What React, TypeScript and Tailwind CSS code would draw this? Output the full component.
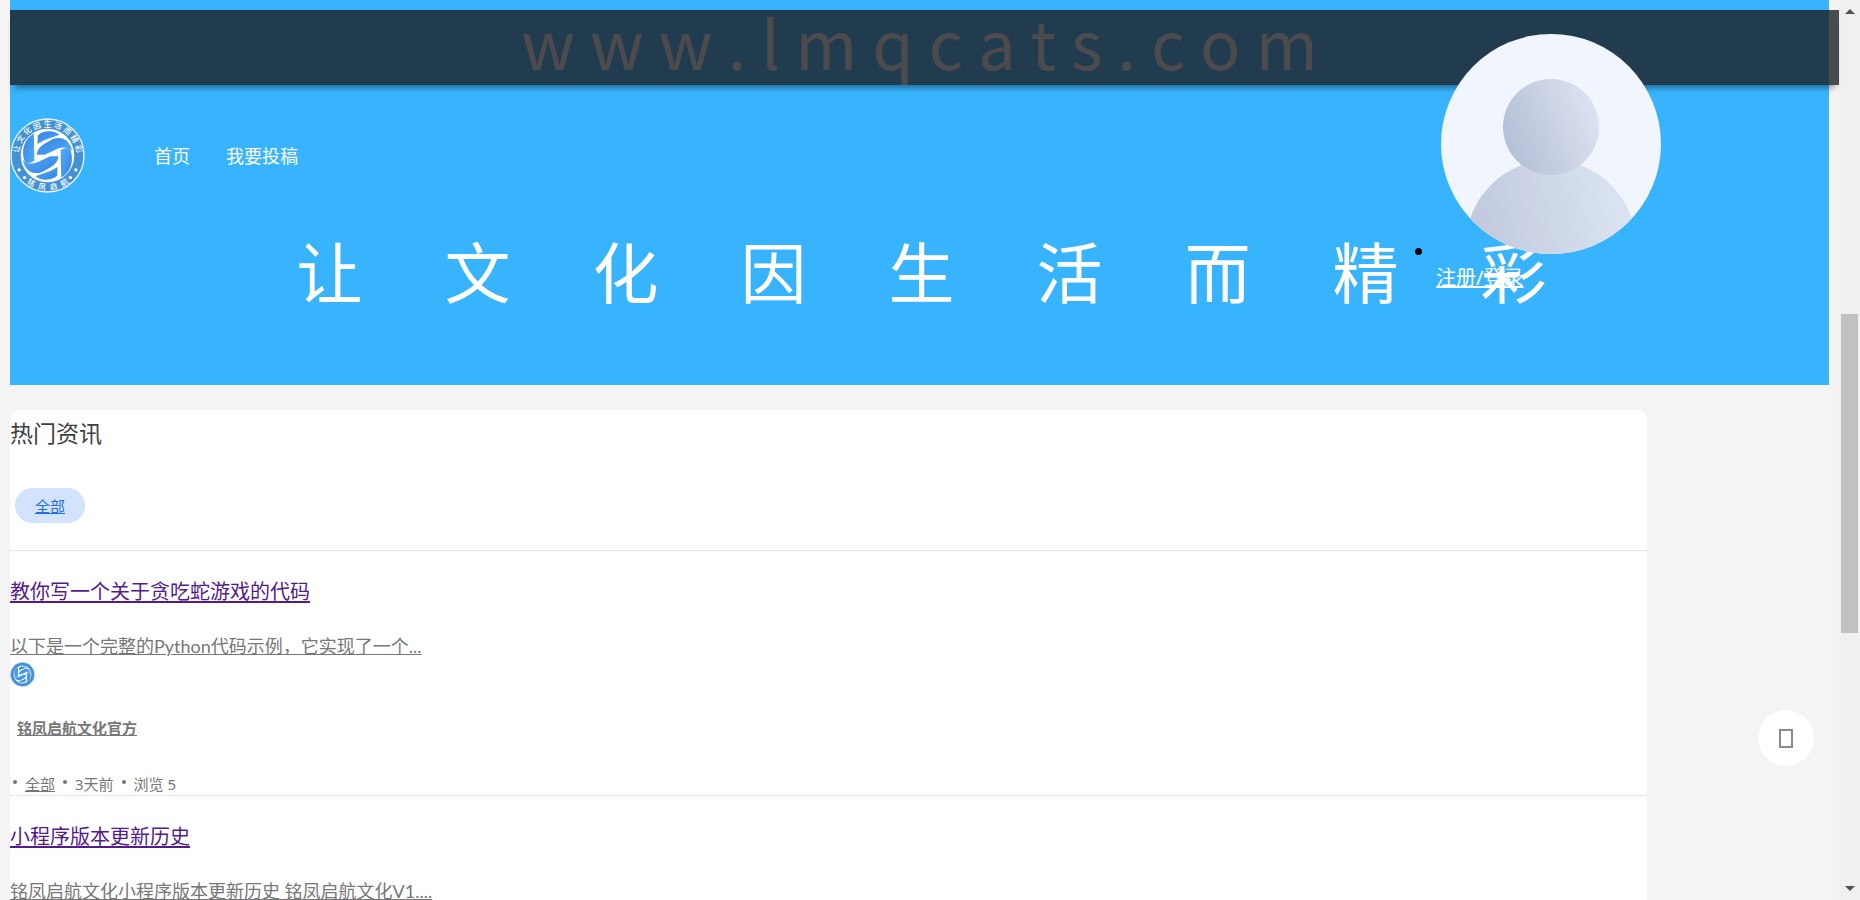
const slogan = ["让", "文", "化", "因", "生", "活", "而", "精", "彩"];

const posts = [
  {
    title: "教你写一个关于贪吃蛇游戏的代码",
    summary: "以下是一个完整的Python代码示例，它实现了一个...",
    author: "铭凤启航文化官方",
    category: "全部",
    time: "3天前",
    views: 5,
  },
  {
    title: "小程序版本更新历史",
    summary: "铭凤启航文化小程序版本更新历史 铭凤启航文化V1....",
    author: "铭凤启航文化官方",
    category: "全部",
    time: "3天前",
    views: 5,
  },
];

function ringPoint(deg: number, r: number) {
  const a = ((deg - 90) * Math.PI) / 180;
  return { x: 112 + r * Math.cos(a), y: 112 + r * Math.sin(a) };
}

function Swoosh({ fill }: { fill: string }) {
  return (
    <g fill={fill}>
      <path d="M82 78 L83 52 C96 38 130 34 148 50 L104 66 Z" />
      <path d="M71 46 C44 62 32 94 43 128 C48 138 60 136 73 128 Z" />
      <path d="M80 110 C80 94 92 84 104 76 L130 62 C154 54 178 64 186 98 C172 86 158 86 142 92 L104 110 Z" />
    </g>
  );
}

function Logo({ id, className, lettered }: { id: string; className: string; lettered?: boolean }) {
  const top = slogan.map((c, i) => ({ c, deg: -78 + i * 19.5 }));
  const bottom = ["铭", "凤", "启", "航"].map((c, i) => ({ c, deg: 211 - i * 21 }));
  return (
    <svg viewBox="0 0 224 224" className={className} role="img" aria-label="铭凤启航">
      <defs>
        <linearGradient id={id} x1="0" y1="0" x2="1" y2="1">
          <stop offset="0" stopColor="#3380e4" />
          <stop offset="1" stopColor="#52aef9" />
        </linearGradient>
      </defs>
      <circle cx="112" cy="112" r="109" fill="#4392d6" stroke="#e8f5ff" strokeWidth="4" />
      <circle cx="112" cy="112" r="80" fill="#fff" />
      <Swoosh fill={`url(#${id})`} />
      <g transform="rotate(180 112 112)">
        <Swoosh fill={`url(#${id})`} />
      </g>
      {lettered && (
        <g fill="#fff" fontSize="23" fontWeight="500" textAnchor="middle">
          {top.map(({ c, deg }) => {
            const p = ringPoint(deg, 86);
            return (
              <text key={c} x={p.x} y={p.y} transform={`rotate(${deg} ${p.x} ${p.y})`}>
                {c}
              </text>
            );
          })}
          {bottom.map(({ c, deg }) => {
            const p = ringPoint(deg, 103);
            return (
              <text key={c} x={p.x} y={p.y} transform={`rotate(${deg - 180} ${p.x} ${p.y})`}>
                {c}
              </text>
            );
          })}
          {[117, 134, 226, 243].map((deg) => {
            const p = ringPoint(deg, 95);
            return <circle key={deg} cx={p.x} cy={p.y} r="5" />;
          })}
        </g>
      )}
    </svg>
  );
}

function Avatar() {
  return (
    <svg viewBox="0 0 220 220" className="size-[220px]" role="img" aria-label="头像">
      <defs>
        <clipPath id="avatar-clip">
          <circle cx="110" cy="110" r="110" />
        </clipPath>
        <linearGradient id="avatar-head" x1="0" y1="0.7" x2="1" y2="0.3">
          <stop offset="0" stopColor="#b3bfd6" />
          <stop offset="1" stopColor="#dde3f1" />
        </linearGradient>
        <linearGradient id="avatar-body" x1="0" y1="0.6" x2="1" y2="0.4">
          <stop offset="0" stopColor="#bfc6dc" />
          <stop offset="1" stopColor="#dbe5f2" />
        </linearGradient>
      </defs>
      <g clipPath="url(#avatar-clip)">
        <rect width="220" height="220" fill="#f0f5fe" />
        <circle cx="110" cy="211" r="85" fill="url(#avatar-body)" />
        <circle cx="110" cy="93" r="48" fill="url(#avatar-head)" />
      </g>
    </svg>
  );
}

function Header() {
  return (
    <header className="relative h-[385px] bg-[#38b4ff]">
      <p className="flex h-[82px] items-center justify-center whitespace-pre font-['Noto_Sans_CJK_SC'] text-[67px] text-[#f4f4f4]">
        w w w . l m q c a t s . c o m
      </p>
      <nav className="mt-9 flex h-[75px] items-center text-[18px] text-white">
        <a href="#home">
          <Logo id="logo-main" className="size-[75px]" lettered />
        </a>
        <a href="#home" className="ml-[69px] pt-0.5">首页</a>
        <a href="#submit" className="ml-9 pt-0.5">我要投稿</a>
      </nav>
      <h1 className="mt-[31px] flex justify-center pl-1 text-center text-[66px] leading-[96px] font-normal text-white">
        {slogan.map((c) => (
          <span key={c} className="w-[148px]">{c}</span>
        ))}
      </h1>
      <div className="absolute top-[10px] left-0 -right-[10px] h-[75px] bg-[#1b191d]/78 shadow-[0_7px_6px_-4px_rgba(0,0,0,0.4)]" />
      <div className="absolute top-[34px] right-[168px]">
        <Avatar />
        <span className="absolute top-[214px] -left-[26px] size-[7px] rounded-full bg-black" />
        <a href="#login" className="absolute top-[230px] -left-[5px] text-[20px] leading-7 whitespace-nowrap text-white underline">
          注册/登录
        </a>
      </div>
    </header>
  );
}

function Post({ post }: { post: (typeof posts)[number] }) {
  return (
    <li className="h-[245px] border-t border-dotted border-[#d4d4d4] pt-[25px] text-[#777]">
      <h3 className="text-[20px] leading-8">
        <a href="#post" className="text-[#551a8b] underline decoration-2 underline-offset-2">{post.title}</a>
      </h3>
      <a href="#post" className="mt-6 block font-['Lato','Noto_Sans_CJK_SC',sans-serif] text-[18px] leading-7 underline">{post.summary}</a>
      <Logo id={`logo-${post.title}`} className="mt-0.5 size-[25px]" />
      <p className="mt-[29px] ml-[7px] text-[15px] leading-6 font-bold">
        <a href="#author" className="underline">{post.author}</a>
      </p>
      <p className="mt-8 flex items-center text-[15px] leading-6">
        <span className="w-[15px] pl-[3px]"><i className="mb-[5px] block size-[4px] rounded-full bg-[#777]" /></span>
        <a href="#all" className="underline">{post.category}</a>
        <i className="mx-2 mb-[5px] size-[4px] rounded-full bg-[#777]" />
        {post.time}
        <i className="mx-2 mb-[5px] size-[4px] rounded-full bg-[#777]" />
        浏览 {post.views}
      </p>
    </li>
  );
}

function Scrollbar() {
  return (
    <div className="flex w-[21px] shrink-0 flex-col items-center bg-[#f0f0f0] pt-[9px] pb-[9px]" aria-hidden="true">
      <svg viewBox="0 0 10 5" className="h-[5px] w-[10px]"><path d="M0 5 L5 0 L10 5 Z" fill="#505050" /></svg>
      <div className="mt-[300px] h-[319px] w-[17px] bg-[#c1c1c1]" />
      <svg viewBox="0 0 10 5" className="mt-auto h-[5px] w-[10px]"><path d="M0 0 L5 5 L10 0 Z" fill="#505050" /></svg>
    </div>
  );
}

export default function App() {
  return (
    <div className="flex h-screen overflow-hidden bg-[#f4f4f4] font-['Noto_Sans','Noto_Sans_CJK_SC',sans-serif]">
      <div className="relative min-w-0 flex-1 px-[10px]">
        <Header />
        <main className="mt-[25px] w-9/10 rounded-[10px] bg-white">
          <h2 className="pt-[7px] text-[23px] leading-8 text-[#404040]">热门资讯</h2>
          <div className="mt-[39px] mb-[27px] ml-[5px] flex">
            <a href="#all" className="rounded-full bg-[#d3e3fd] px-5 pt-0.5 text-[15px] leading-[33px] text-[#1a6fe0] underline">全部</a>
          </div>
          <ul>
            {posts.map((p) => (
              <Post key={p.title} post={p} />
            ))}
          </ul>
        </main>
        <button type="button" aria-label="返回顶部" className="absolute right-[25px] bottom-[134px] flex size-14 items-center justify-center rounded-full bg-white">
          <svg viewBox="0 0 14 20" className="h-5 w-[14px]"><rect x="1" y="2" width="12" height="17" fill="none" stroke="#8a8a8a" strokeWidth="2" /></svg>
        </button>
      </div>
      <Scrollbar />
    </div>
  );
}
